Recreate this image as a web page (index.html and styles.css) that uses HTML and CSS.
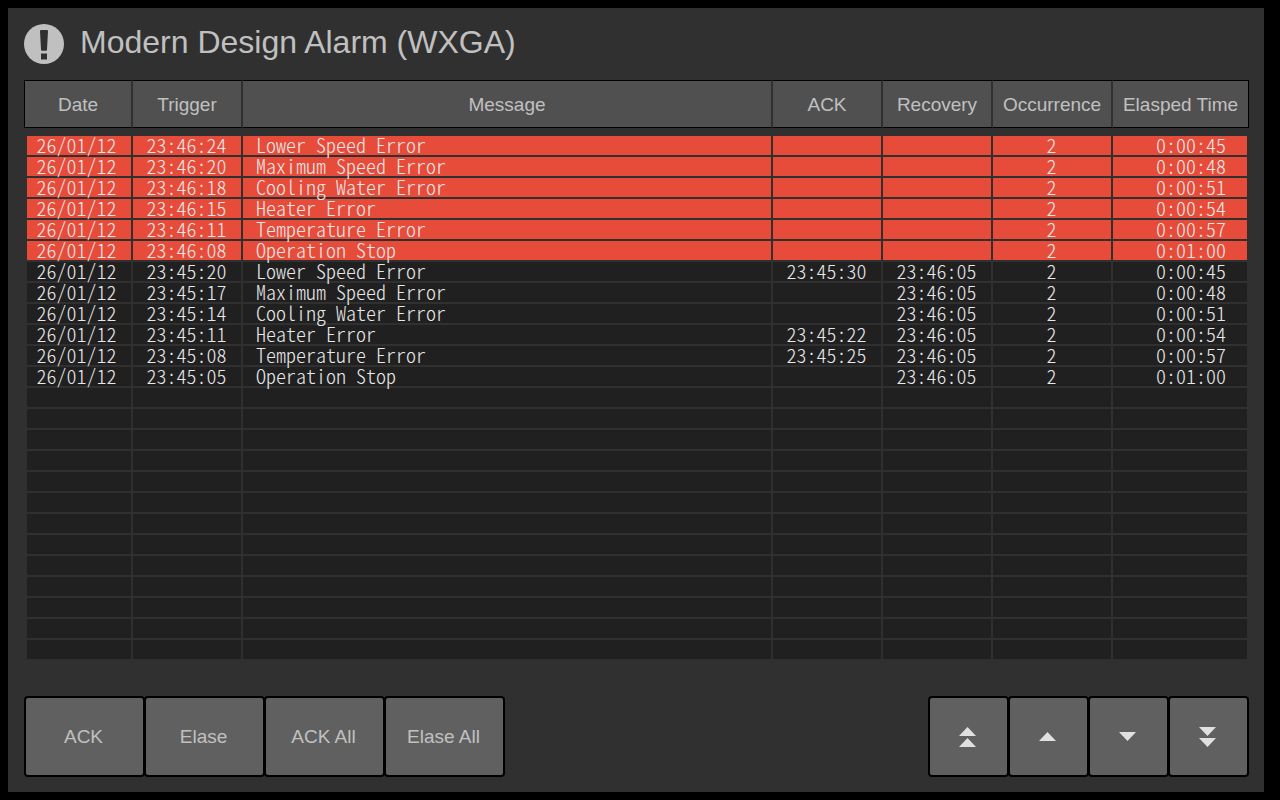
FILE: index.html
```html
<!DOCTYPE html>
<html lang="en">
<head>
	<meta charset="UTF-8">
	<title>Modern Design Alarm (WXGA)</title>
	<link rel="stylesheet" href="styles.css">
</head>
<body>
<div class="panel">
	<header class="title">
		<svg class="title-icon" viewBox="0 0 40 40" aria-hidden="true">
			<circle cx="20" cy="20" r="20"/>
			<path class="mark" d="M17 6h6q1 0 1 1l-1 18.500q0 1.200-1 1.200h-4q-1 0-1-1.200L16 7q0-1 1-1zM17 29.500h6v6h-6z"/>
		</svg>
		<h1>Modern Design Alarm (WXGA)</h1>
	</header>

	<table class="alarms">
		<colgroup>
			<col class="col-date">
			<col class="col-time">
			<col>
			<col class="col-time">
			<col class="col-time">
			<col class="col-count">
			<col class="col-elapsed">
		</colgroup>
		<thead>
			<tr>
				<th>Date</th>
				<th>Trigger</th>
				<th>Message</th>
				<th>ACK</th>
				<th>Recovery</th>
				<th>Occurrence</th>
				<th>Elasped Time</th>
			</tr>
		</thead>
		<tbody id="rows"></tbody>
	</table>

	<footer class="toolbar">
		<div class="group">
			<button type="button">ACK</button>
			<button type="button">Elase</button>
			<button type="button">ACK All</button>
			<button type="button">Elase All</button>
		</div>
		<div class="group scroll">
			<button type="button" aria-label="Page up">
				<svg viewBox="0 0 17 20"><path d="M8.500 0L17 9H0zM8.500 11L17 20H0z"/></svg>
			</button>
			<button type="button" aria-label="Up">
				<svg viewBox="0 0 17 20"><path d="M8.500 5L17 14H0z"/></svg>
			</button>
			<button type="button" aria-label="Down">
				<svg viewBox="0 0 17 20"><path d="M0 5H17L8.500 14z"/></svg>
			</button>
			<button type="button" aria-label="Page down">
				<svg viewBox="0 0 17 20"><path d="M0 0H17L8.500 9zM0 11H17L8.500 20z"/></svg>
			</button>
		</div>
	</footer>
</div>
<script src="alarm.js"></script>
</body>
</html>
```

FILE: styles.css
```css
*{
	box-sizing: border-box;
}
body{
	margin: 0;
	padding: 8px 16px 8px 8px;
	background-color: #000;
	color: #c0c0c0;
	font-family: "Liberation Sans", Arial, sans-serif;
}
.panel{
	display: flex;
	flex-direction: column;
	min-height: calc(100vh - 16px);
	padding: 16px 15px 15px 16px;
	background-color: #303030;
}

/* title */
.title{
	display: flex;
	gap: 16px;
	margin-bottom: 16px;
}
.title-icon{
	width: 40px;
	height: 40px;
	fill: #c0c0c0;
}
.title-icon .mark{
	fill: #303030;
}
.title h1{
	margin: 0;
	font-size: 32px;
	line-height: 36px;
	font-weight: normal;
}

/* alarm list */
.alarms{
	width: 100%;
	table-layout: fixed;
	border-collapse: separate;
	border-spacing: 0;
}
.col-date{
	width: 109px;
}
.col-time{
	width: 110px;
}
.col-count{
	width: 120px;
}
.col-elapsed{
	width: 136px;
}
.alarms th{
	height: 48px;
	padding: 2px 0 0;
	border: solid #000;
	border-width: 1px 0;
	border-right: 2px solid #303030;
	background-color: #505050;
	font-size: 19px;
	font-weight: normal;
	white-space: nowrap;
}
.alarms th:first-child{
	border-left: 1px solid #000;
}
.alarms th:last-child{
	border-right: 1px solid #000;
}
.alarms tbody::before{
	content: "";
	display: block;
	height: 8px;
}
.alarms td{
	height: 21px;
	padding: 0 1px 0 0;
	border-right: 2px solid #303030;
	border-bottom: 2px solid #303030;
	background-color: #202020;
	color: #e8e8e8;
	font-family: "Noto Sans CJK JP", monospace;
	font-feature-settings: "hwid";
	font-size: 20px;
	font-weight: 300;
	line-height: 17px;
	text-align: center;
	vertical-align: top;
	white-space: nowrap;
}
.alarms td:first-child{
	border-left: 3px solid #303030;
	padding-right: 5px;
}
.alarms td:nth-child(3){
	padding-left: 13px;
	text-align: left;
}
.alarms td:last-child{
	padding-right: 21px;
	text-align: right;
}
.alarms .active td{
	background-color: #e74c3a;
}

/* bottom buttons */
.toolbar{
	display: flex;
	justify-content: space-between;
	margin-top: auto;
}
.group{
	display: flex;
}
.group button{
	display: flex;
	align-items: center;
	justify-content: center;
	width: 121px;
	height: 81px;
	padding: 0 2px 0 0;
	border: 2px solid #000;
	border-radius: 4px;
	background-color: #606060;
	color: #c0c0c0;
	font-family: inherit;
	font-size: 19px;
}
.group button + button{
	margin-left: -1px;
}
.scroll button{
	width: 81px;
}
.scroll svg{
	width: 17px;
	height: 20px;
	fill: #e0e0e0;
}
```

FILE: alarm.js
```js
//date, trigger, message, ack, recovery, occurrence, elapsed
var alarms = [
	["26/01/12", "23:46:24", "Lower Speed Error", "", "", "2", "0:00:45"],
	["26/01/12", "23:46:20", "Maximum Speed Error", "", "", "2", "0:00:48"],
	["26/01/12", "23:46:18", "Cooling Water Error", "", "", "2", "0:00:51"],
	["26/01/12", "23:46:15", "Heater Error", "", "", "2", "0:00:54"],
	["26/01/12", "23:46:11", "Temperature Error", "", "", "2", "0:00:57"],
	["26/01/12", "23:46:08", "Operation Stop", "", "", "2", "0:01:00"],
	["26/01/12", "23:45:20", "Lower Speed Error", "23:45:30", "23:46:05", "2", "0:00:45"],
	["26/01/12", "23:45:17", "Maximum Speed Error", "", "23:46:05", "2", "0:00:48"],
	["26/01/12", "23:45:14", "Cooling Water Error", "", "23:46:05", "2", "0:00:51"],
	["26/01/12", "23:45:11", "Heater Error", "23:45:22", "23:46:05", "2", "0:00:54"],
	["26/01/12", "23:45:08", "Temperature Error", "23:45:25", "23:46:05", "2", "0:00:57"],
	["26/01/12", "23:45:05", "Operation Stop", "", "23:46:05", "2", "0:01:00"]
];
var ROWS = 25;
var tbody = document.getElementById("rows");

for(var i=0;i<ROWS;i++){
	var data = alarms[i] || ["", "", "", "", "", "", ""];
	var tr = tbody.insertRow();
	//not recovered yet
	if(data[0] && !data[4]){
		tr.className = "active";
	}
	for(var j=0;j<data.length;j++){
		tr.insertCell().textContent = data[j];
	}
}
```
